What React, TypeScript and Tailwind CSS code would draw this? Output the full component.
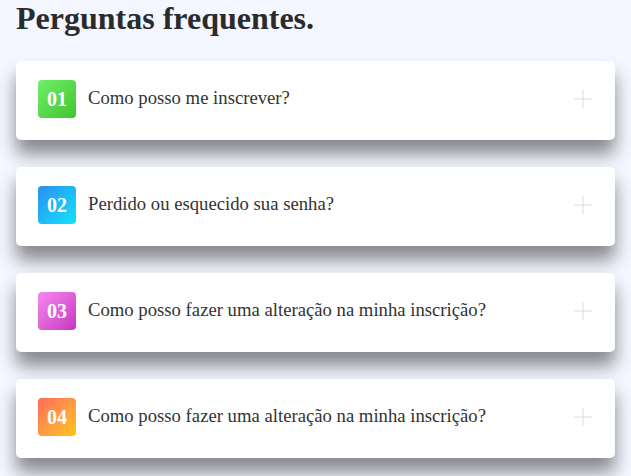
import React from 'react';

const faqs = [
  { n: '01', q: 'Como posso me inscrever?', badge: 'bg-gradient-to-br from-[#72ee6a] to-[#3fc52c]' },
  { n: '02', q: 'Perdido ou esquecido sua senha?', badge: 'bg-gradient-to-br from-[#2b8ef0] to-[#0fe3fb]' },
  { n: '03', q: 'Como posso fazer uma alteração na minha inscrição?', badge: 'bg-gradient-to-br from-[#f787ef] to-[#c635c2]' },
  { n: '04', q: 'Como posso fazer uma alteração na minha inscrição?', badge: 'bg-gradient-to-br from-[#ff6a57] to-[#ffc400]' },
];

const PlusIcon = () => (
  <svg width="18" height="18" viewBox="0 0 18 18" className="text-[#d3dee6]">
    <path d="M9 0v18M0 9h18" stroke="currentColor" strokeWidth={1} fill="none" />
  </svg>
);

export default function App() {
  return (
    <div
      className="min-h-screen bg-[#f4f7ff] px-4 text-[#333]"
      style={{ fontFamily: '"Liberation Serif", "Times New Roman", serif' }}
    >
      <h1 className="text-[32px] font-bold leading-[36px] text-[#2b2b2b]">Perguntas frequentes.</h1>
      <div className="mt-[25px] flex flex-col gap-[27px]">
        {faqs.map((f) => (
          <div
            key={f.n}
            className="flex h-[79px] items-center rounded-[5px] bg-white pb-[4px] pl-[22px] pr-[23px] shadow-[0_14px_18px_rgba(0,0,0,0.45)]"
          >
            <div
              className={`flex h-[38px] w-[38px] items-center justify-center rounded-[4px] text-[20px] font-bold text-white ${f.badge}`}
            >
              {f.n}
            </div>
            <span className="ml-[12px] flex-1 text-[18.7px] text-[#333]">{f.q}</span>
            <PlusIcon />
          </div>
        ))}
      </div>
    </div>
  );
}
